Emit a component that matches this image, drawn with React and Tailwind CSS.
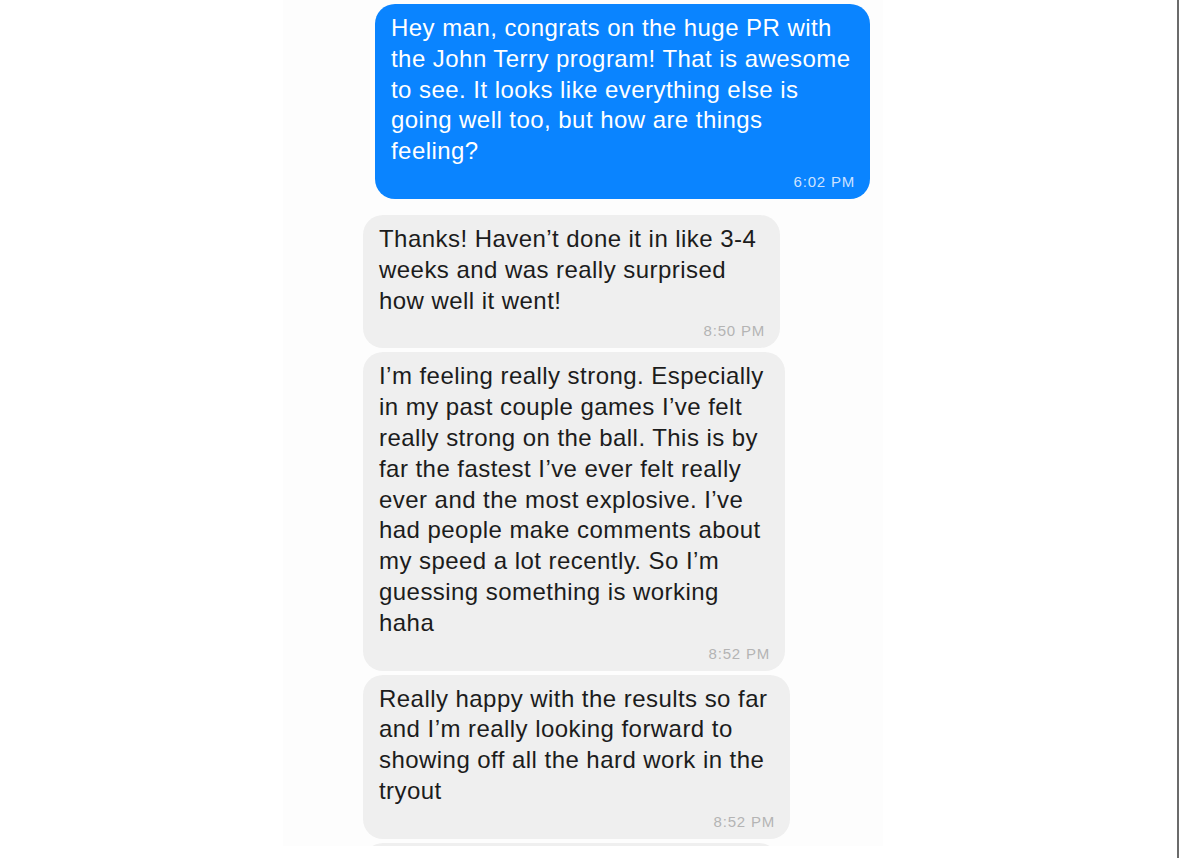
const messages = [
  {
    id: 1,
    mine: true,
    width: 'w-[495px]',
    lines: [
      'Hey man, congrats on the huge PR with',
      'the John Terry program! That is awesome',
      'to see. It looks like everything else is',
      'going well too, but how are things',
      'feeling?',
    ],
    time: '6:02 PM',
  },
  {
    id: 2,
    mine: false,
    width: 'w-[417px]',
    lines: [
      'Thanks! Haven\u2019t done it in like 3-4',
      'weeks and was really surprised',
      'how well it went!',
    ],
    time: '8:50 PM',
  },
  {
    id: 3,
    mine: false,
    width: 'w-[422px]',
    lines: [
      'I\u2019m feeling really strong. Especially',
      'in my past couple games I\u2019ve felt',
      'really strong on the ball. This is by',
      'far the fastest I\u2019ve ever felt really',
      'ever and the most explosive. I\u2019ve',
      'had people make comments about',
      'my speed a lot recently. So I\u2019m',
      'guessing something is working',
      'haha',
    ],
    time: '8:52 PM',
  },
  {
    id: 4,
    mine: false,
    width: 'w-[427px]',
    lines: [
      'Really happy with the results so far',
      'and I\u2019m really looking forward to',
      'showing off all the hard work in the',
      'tryout',
    ],
    time: '8:52 PM',
  },
];

const Bubble = ({ msg }) => (
  <div
    className={`${msg.width} shrink-0 rounded-[20px] pl-4 pr-[15px] pt-[9px] pb-[7px] ${
      msg.mine ? 'self-end bg-[#0a84ff] text-white' : 'self-start bg-[#efefef] text-[#1c1c1c]'
    }`}
  >
    <p className="text-[24px] leading-[30.8px] tracking-[0.45px]">
      {msg.lines.map((line, i) => (
        <span key={i} className="block whitespace-nowrap">
          {line}
        </span>
      ))}
    </p>
    <div
      className={`mt-[5px] text-right text-[15px] leading-[20px] tracking-[0.8px] ${
        msg.mine ? 'text-[#cde2ff]' : 'text-[#b4b4b4]'
      }`}
    >
      {msg.time}
    </div>
  </div>
);

export default function App() {
  return (
    <div
      className="flex h-[858px] w-full bg-white"
      style={{ fontFamily: '"Liberation Sans", Arial, sans-serif' }}
    >
      <div className="flex flex-1 justify-start">
        {/* Chat screenshot column */}
        <div className="ml-[283px] flex h-[846px] w-[600px] flex-col overflow-hidden bg-[#fdfdfd] pt-1 pl-[80px] pr-[13px]">
          <Bubble msg={messages[0]} />
          <div className="mt-4 flex flex-col gap-1">
            {messages.slice(1).map((msg) => (
              <Bubble key={msg.id} msg={msg} />
            ))}
            <div className="h-10 w-[416px] shrink-0 rounded-[20px] bg-[#efefef]" />
          </div>
        </div>
      </div>
      <div className="w-[2px] bg-[#6b6b6b]" />
    </div>
  );
}
